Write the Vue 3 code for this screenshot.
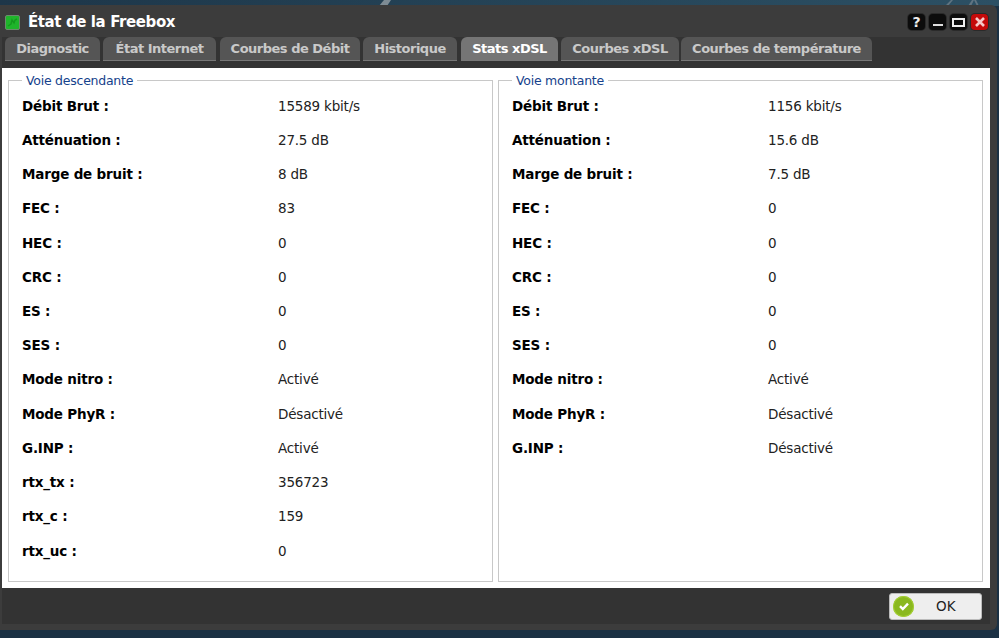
<script setup>
const tabs = [
  { label: 'Diagnostic', width: 95, gap: 3 },
  { label: 'État Internet', width: 113, gap: 4 },
  { label: 'Courbes de Débit', width: 140, gap: 3 },
  { label: 'Historique', width: 94, gap: 4 },
  { label: 'Stats xDSL', width: 97, gap: 3, active: true },
  { label: 'Courbes xDSL', width: 118, gap: 2 },
  { label: 'Courbes de température', width: 191, gap: 0 }
]
const down = [
  ['Débit Brut :', '15589 kbit/s'], ['Atténuation :', '27.5 dB'], ['Marge de bruit :', '8 dB'],
  ['FEC :', '83'], ['HEC :', '0'], ['CRC :', '0'], ['ES :', '0'], ['SES :', '0'],
  ['Mode nitro :', 'Activé'], ['Mode PhyR :', 'Désactivé'], ['G.INP :', 'Activé'],
  ['rtx_tx :', '356723'], ['rtx_c :', '159'], ['rtx_uc :', '0']
]
const up = [
  ['Débit Brut :', '1156 kbit/s'], ['Atténuation :', '15.6 dB'], ['Marge de bruit :', '7.5 dB'],
  ['FEC :', '0'], ['HEC :', '0'], ['CRC :', '0'], ['ES :', '0'], ['SES :', '0'],
  ['Mode nitro :', 'Activé'], ['Mode PhyR :', 'Désactivé'], ['G.INP :', 'Désactivé']
]
const panels = [
  { title: 'Voie descendante', rows: down },
  { title: 'Voie montante', rows: up }
]
</script>

<template>
  <div class="desk">
    <svg class="wall" width="999" height="6" viewBox="0 0 999 6">
      <path d="M379 6l5-6h7l-4 6z" fill="#7d8b94"/>
      <path d="M945 6l6-6h2l-5 6zM968 6l4-6h2l-3 6zM974 0l3 6h2l-3-6z" fill="#5f7482"/>
    </svg>
    <div class="window">
      <header class="head">
        <span class="logo">
          <svg width="13" height="13" viewBox="0 0 13 13"><path d="M2 10l3-2 1-4 2 3 1-3 2-1" stroke="#149a1e" stroke-width="1.4" fill="none"/></svg>
        </span>
        <h1 class="title">État de la Freebox</h1>
        <div class="tools">
          <span class="tool help">?</span>
          <span class="tool"><i class="bar"></i></span>
          <span class="tool"><i class="box"></i></span>
          <span class="tool close">
            <svg width="12" height="12" viewBox="0 0 12 12"><path d="M2 2l8 8M10 2l-8 8" stroke="#f6c9c9" stroke-width="2.6" fill="none"/></svg>
          </span>
        </div>
      </header>
      <div class="inner">
        <nav class="tabs">
          <span
            v-for="t in tabs"
            :key="t.label"
            class="tab"
            :class="{ on: t.active }"
            :style="{ width: t.width + 'px', marginRight: t.gap + 'px' }"
          >{{ t.label }}</span>
        </nav>
        <main class="body">
          <fieldset v-for="p in panels" :key="p.title" class="panel">
            <legend class="legend">{{ p.title }}</legend>
            <div v-for="r in p.rows" :key="r[0]" class="row">
              <b class="key">{{ r[0] }}</b>
              <span class="val">{{ r[1] }}</span>
            </div>
          </fieldset>
        </main>
        <footer class="foot">
          <button class="ok" type="button">
            <span class="tick">
              <svg width="14" height="14" viewBox="0 0 14 14"><path d="M3 7.2l2.8 2.8L11 4.6" stroke="#fff" stroke-width="2.4" fill="none"/></svg>
            </span>
            <span class="oklabel">OK</span>
          </button>
        </footer>
      </div>
    </div>
  </div>
</template>

<style>
html, body { margin: 0; background: #1b3144; }
</style>

<style scoped>
.desk {
  position: relative;
  width: 999px;
  height: 638px;
  overflow: hidden;
  box-sizing: border-box;
  padding: 5px 2px 8px 0;
  background: linear-gradient(90deg, #1d3649 0, #2c5064 100%) top / 100% 6px no-repeat, #1b3144;
  font-family: "DejaVu Sans", sans-serif;
}
.wall {
  position: absolute;
  left: 0;
  top: 0;
}
.window {
  position: relative;
  height: 625px;
  box-sizing: border-box;
  background: #3c3c3c;
  border-radius: 0 6px 6px 0;
  padding: 0 7px 6px 2px;
  display: flex;
  flex-direction: column;
}
.head {
  height: 32px;
  flex: none;
  display: flex;
  align-items: center;
  padding: 2px 0 0 3px;
  box-sizing: border-box;
}
.logo {
  width: 15px;
  height: 15px;
  background: #1fb52b;
  border: 1px solid #6d8a6d;
  box-sizing: border-box;
  border-radius: 2px;
  margin-right: 8px;
  display: flex;
}
.title {
  margin: 0;
  color: #fff;
  font-size: 15px;
  font-weight: 700;
  flex: 1;
  letter-spacing: -0.4px;
}
.tools {
  display: flex;
  gap: 4px;
  margin-right: 2px;
}
.tool {
  width: 17px;
  height: 16px;
  border-radius: 4px;
  background: #0c0c0c;
  box-shadow: 0 0 0 1px #2a2a2a;
  color: #eee;
  font-size: 14px;
  font-weight: 700;
  display: flex;
  align-items: center;
  justify-content: center;
}
.bar { width: 10px; height: 2px; background: #ddd; margin-top: 6px; }
.box { width: 9px; height: 5px; border: 2px solid #eee; }
.close { background: #c40a0a; }
.inner {
  flex: 1;
  min-height: 0;
  display: flex;
  flex-direction: column;
  background: #333;
}
.tabs {
  height: 31px;
  flex: none;
  display: flex;
  padding-left: 3px;
  box-sizing: border-box;
}
.tab {
  height: 24px;
  box-sizing: border-box;
  border-radius: 6px 6px 0 0;
  background: #555;
  border-bottom: 1px solid #777;
  color: #c9c9c9;
  font-size: 13px;
  font-weight: 700;
  line-height: 23px;
  text-align: center;
  white-space: nowrap;
  letter-spacing: -0.5px;
}
.tab.on { background: #757575; color: #fff; }
.body {
  height: 520px;
  flex: none;
  box-sizing: border-box;
  background: #fff;
  padding: 5px 7px 6px 6px;
  display: flex;
  gap: 5px;
}
.panel {
  flex: 1;
  margin: 0;
  min-width: 0;
  box-sizing: border-box;
  border: 1px solid #c8c8c8;
  padding: 0.6px 13px 0;
}
.legend {
  color: #15428b;
  font-size: 12.5px;
  padding: 0 4px;
  margin-left: 0;
  letter-spacing: -0.25px;
}
.row {
  height: 34.23px;
  display: flex;
  align-items: center;
  font-size: 13.5px;
  color: #111;
}
.key { width: 256px; flex: none; color: #000; letter-spacing: -0.18px; }
.val { letter-spacing: -0.2px; color: #222; }
.foot {
  flex: 1;
  display: flex;
  justify-content: flex-end;
  align-items: center;
  padding-right: 8px;
}
.ok {
  width: 93px;
  height: 27px;
  border: 1px solid #bbb;
  border-radius: 3px;
  background: #eee;
  padding: 0 0 0 3px;
  display: flex;
  align-items: center;
  font-family: inherit;
  font-size: 13.5px;
  color: #222;
}
.tick {
  width: 21px;
  height: 21px;
  border-radius: 50%;
  background: #8ab81f;
  display: flex;
  align-items: center;
  justify-content: center;
  box-shadow: inset 0 0 0 1px #a5cf35;
}
.oklabel { margin-left: 22px; }
</style>
